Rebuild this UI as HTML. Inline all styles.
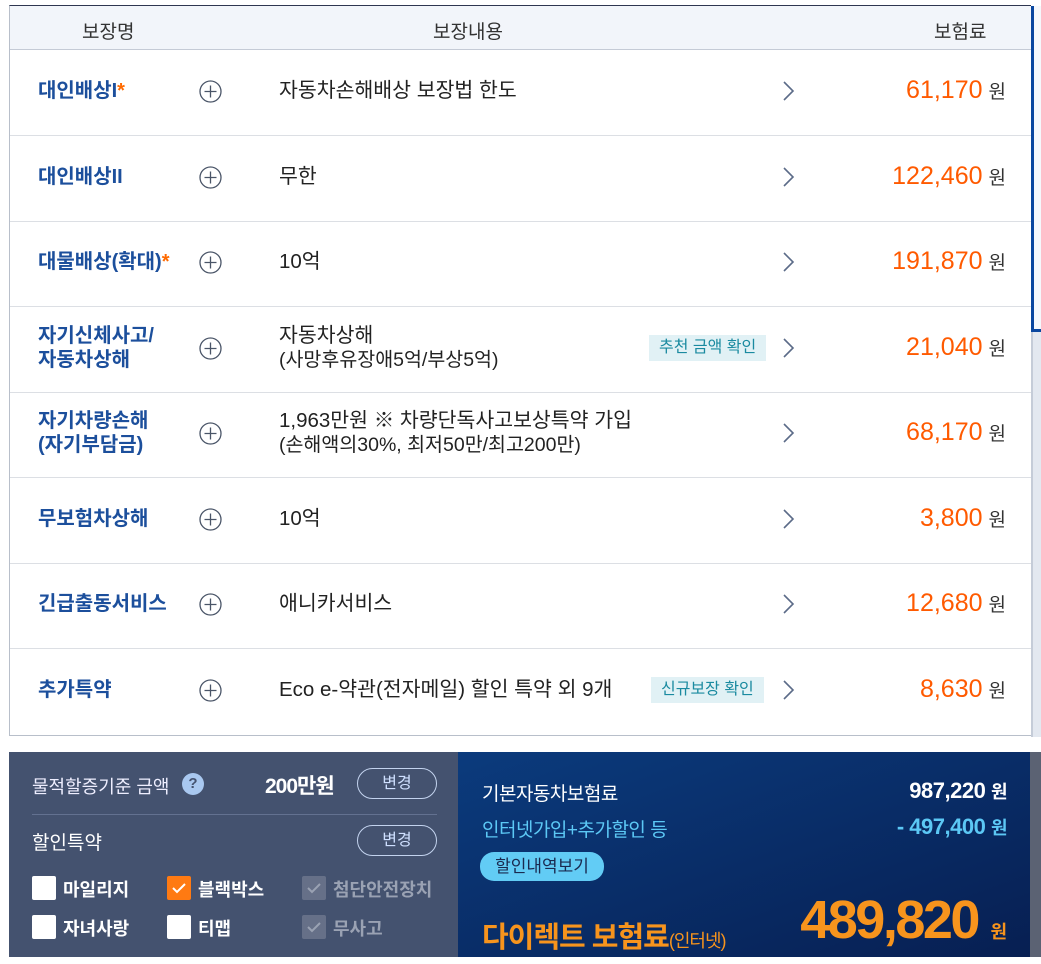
<!DOCTYPE html>
<html><head><meta charset="utf-8"><style>
*{margin:0;padding:0;box-sizing:border-box}
body{width:1041px;height:957px;overflow:hidden;background:#fff;font-family:"Liberation Sans","Noto Sans CJK KR",sans-serif;position:relative}
.abs{position:absolute}
.tbl{left:9px;top:5px;width:1022px;height:731px;border-left:1px solid #b8bfca;border-bottom:1px solid #b8bfca;border-top:1px solid #2e3650}
.hdr{left:10px;top:6px;width:1021px;height:44px;background:#f2f5fa;border-bottom:1px solid #c5cbd6;font-size:19px;color:#333}
.row{left:10px;width:1021px;height:86px;border-bottom:1px solid #dcdfe4}
.name{position:absolute;left:28px;top:0;height:100%;display:flex;align-items:center;color:#1c4f9c;font-weight:bold;font-size:20px;line-height:24px}
.name i{color:#ff6a00;font-style:normal}
.plus{position:absolute;left:189px;top:50%;margin-top:-13px;width:23px;height:23px}
.cont{position:absolute;left:269px;top:0;height:100%;display:flex;flex-direction:column;justify-content:center;font-size:20.5px;color:#222;line-height:24px;padding-bottom:4px}
.cont small{font-size:19.5px}
.chev{position:absolute;left:772px;top:50%;margin-top:-13px}
.price{position:absolute;right:25px;top:50%;margin-top:-18px;font-size:25px;color:#ff5a00;line-height:30px}
.price span{color:#333;font-size:19px;margin-left:6px}
.badge{position:absolute;top:50%;margin-top:-15px;height:26px;background:#e1f1f5;color:#1a8aa0;font-size:16px;line-height:26px;padding:0 10px}
.lp{left:9px;top:752px;width:449px;height:205px;background:#44526f;color:#fff}
.rp{left:458px;top:752px;width:572px;height:205px;background:linear-gradient(160deg,#0b3b7d,#071f52)}
.btn{position:absolute;width:80px;height:31px;border:1px solid #c3d3ee;border-radius:16px;color:#cfe0ff;font-size:16px;text-align:center;line-height:29px}
.cb{position:absolute;width:24px;height:24px;background:#fff;border-radius:2px}
.cbl{position:absolute;font-size:18px;color:#fff;font-weight:bold}
</style></head><body>
<div class="abs tbl"></div>
<div class="abs hdr">
 <div class="abs" style="left:72px;top:11px">보장명</div>
 <div class="abs" style="left:423px;top:11px">보장내용</div>
 <div class="abs" style="left:924px;top:11px">보험료</div>
</div>
<div class="abs" style="left:1031px;top:6px;width:3px;height:326px;background:#0a47a0"></div>
<div class="abs" style="left:1031px;top:329px;width:10px;height:3px;background:#0a47a0"></div>
<div class="abs" style="left:1034px;top:6px;width:7px;height:323px;background:#f5f8fc"></div>
<div class="abs" style="left:1031px;top:332px;width:10px;height:405px;background:#e3e8f0;border-left:2px solid #c5ccd8"></div>
<div class="abs" style="left:1030px;top:752px;width:11px;height:205px;background:#5b6273"></div>

<div id="rows"></div>
<script>
const R=[
["대인배상I<i>*</i>","자동차손해배상 보장법 한도","","61,170"],
["대인배상II","무한","","122,460"],
["대물배상(확대)<i>*</i>","10억","","191,870"],
["자기신체사고/<br>자동차상해","자동차상해<br><small>(사망후유장애5억/부상5억)</small>","추천 금액 확인","21,040"],
["자기차량손해<br>(자기부담금)","1,963만원 ※ 차량단독사고보상특약 가입<br><small>(손해액의30%, 최저50만/최고200만)</small>","","68,170"],
["무보험차상해","10억","","3,800"],
["긴급출동서비스","애니카서비스","","12,680"],
["추가특약","Eco e-약관(전자메일) 할인 특약 외 9개","신규보장 확인","8,630"]];
const tops=[50,136,221,307,392,478,563,649];
let h="";
R.forEach((r,i)=>{
 let b="";
 if(r[2]){b=`<div class="badge" style="${i==3?'left:639px':'left:641px'}">${r[2]}</div>`}
 h+=`<div class="abs row" style="top:${tops[i]}px;${i==7?'border-bottom:none;':''}">
 <div class="name" style="padding-bottom:4px">${r[0]}</div>
 <svg class="plus" viewBox="0 0 23 23"><circle cx="11.5" cy="11.5" r="10.5" fill="none" stroke="#4a5568" stroke-width="1.3"/><path d="M5.5 11.5h12M11.5 5.5v12" stroke="#4a5568" stroke-width="1.3"/></svg>
 <div class="cont">${r[1]}</div>${b}
 <svg class="chev" width="14" height="22" viewBox="0 0 14 22"><path d="M2 2l9 9-9 9" fill="none" stroke="#5b6b88" stroke-width="1.6"/></svg>
 <div class="price">${r[3]}<span>원</span></div></div>`;
});
document.getElementById('rows').innerHTML=h;
</script>

<div class="abs lp">
 <div class="abs" style="left:23px;top:21px;font-size:18px;color:#eef">물적할증기준 금액</div>
 <div class="abs" style="left:173px;top:21px;width:22px;height:22px;border-radius:50%;background:#a9c8f0;color:#44526f;font-weight:bold;font-size:15px;text-align:center;line-height:22px">?</div>
 <div class="abs" style="left:256px;top:18px;font-size:21px;font-weight:bold;letter-spacing:-1px">200만원</div>
 <div class="btn" style="left:348px;top:16px">변경</div>
 <div class="abs" style="left:23px;top:62px;width:405px;height:1px;background:#637190"></div>
 <div class="abs" style="left:23px;top:76px;font-size:19px">할인특약</div>
 <div class="btn" style="left:348px;top:73px">변경</div>
 <div class="cb" style="left:23px;top:124px"></div><div class="cbl" style="left:54px;top:124px">마일리지</div>
 <div class="cb" style="left:158px;top:124px;background:#ff7a12"><svg width="24" height="24"><path d="M6 12l4 4 8-8" fill="none" stroke="#fff" stroke-width="2"/></svg></div><div class="cbl" style="left:189px;top:124px">블랙박스</div>
 <div class="cb" style="left:293px;top:124px;background:#667088"><svg width="24" height="24"><path d="M6 12l4 4 8-8" fill="none" stroke="#9aa2b3" stroke-width="2"/></svg></div><div class="cbl" style="left:324px;top:124px;color:#9aa2b3">첨단안전장치</div>
 <div class="cb" style="left:23px;top:163px"></div><div class="cbl" style="left:54px;top:163px">자녀사랑</div>
 <div class="cb" style="left:158px;top:163px"></div><div class="cbl" style="left:189px;top:163px">티맵</div>
 <div class="cb" style="left:293px;top:163px;background:#667088"><svg width="24" height="24"><path d="M6 12l4 4 8-8" fill="none" stroke="#9aa2b3" stroke-width="2"/></svg></div><div class="cbl" style="left:324px;top:163px;color:#9aa2b3">무사고</div>
</div>
<div class="abs rp">
 <div class="abs" style="left:24px;top:27px;font-size:19px;color:#fff;letter-spacing:-0.5px">기본자동차보험료</div>
 <div class="abs" style="right:23px;top:26px;font-size:22px;color:#fff;font-weight:bold;letter-spacing:-0.5px">987,220 <span style="font-size:18px">원</span></div>
 <div class="abs" style="left:24px;top:63px;font-size:19px;color:#5cc8f5;letter-spacing:-0.5px">인터넷가입+추가할인 등</div>
 <div class="abs" style="right:23px;top:62px;font-size:22px;color:#5cc8f5;font-weight:bold;letter-spacing:-0.5px">- 497,400 <span style="font-size:18px">원</span></div>
 <div class="abs" style="left:22px;top:100px;width:124px;height:29px;border-radius:14px;background:#62ccf5;color:#1a2a50;font-size:17px;text-align:center;line-height:29px">할인내역보기</div>
 <div class="abs" style="left:24px;top:162px;font-size:29px;color:#f7941d;font-weight:bold;letter-spacing:-1px">다이렉트 보험료<span style="font-size:18px;font-weight:normal">(인터넷)</span></div>
 <div class="abs" style="right:23px;top:136px;font-size:54px;color:#f7941d;letter-spacing:-2.5px;line-height:64px;font-weight:bold">489,820 <span style="font-size:18px;font-weight:bold;letter-spacing:0">원</span></div>
</div>
</body></html>
